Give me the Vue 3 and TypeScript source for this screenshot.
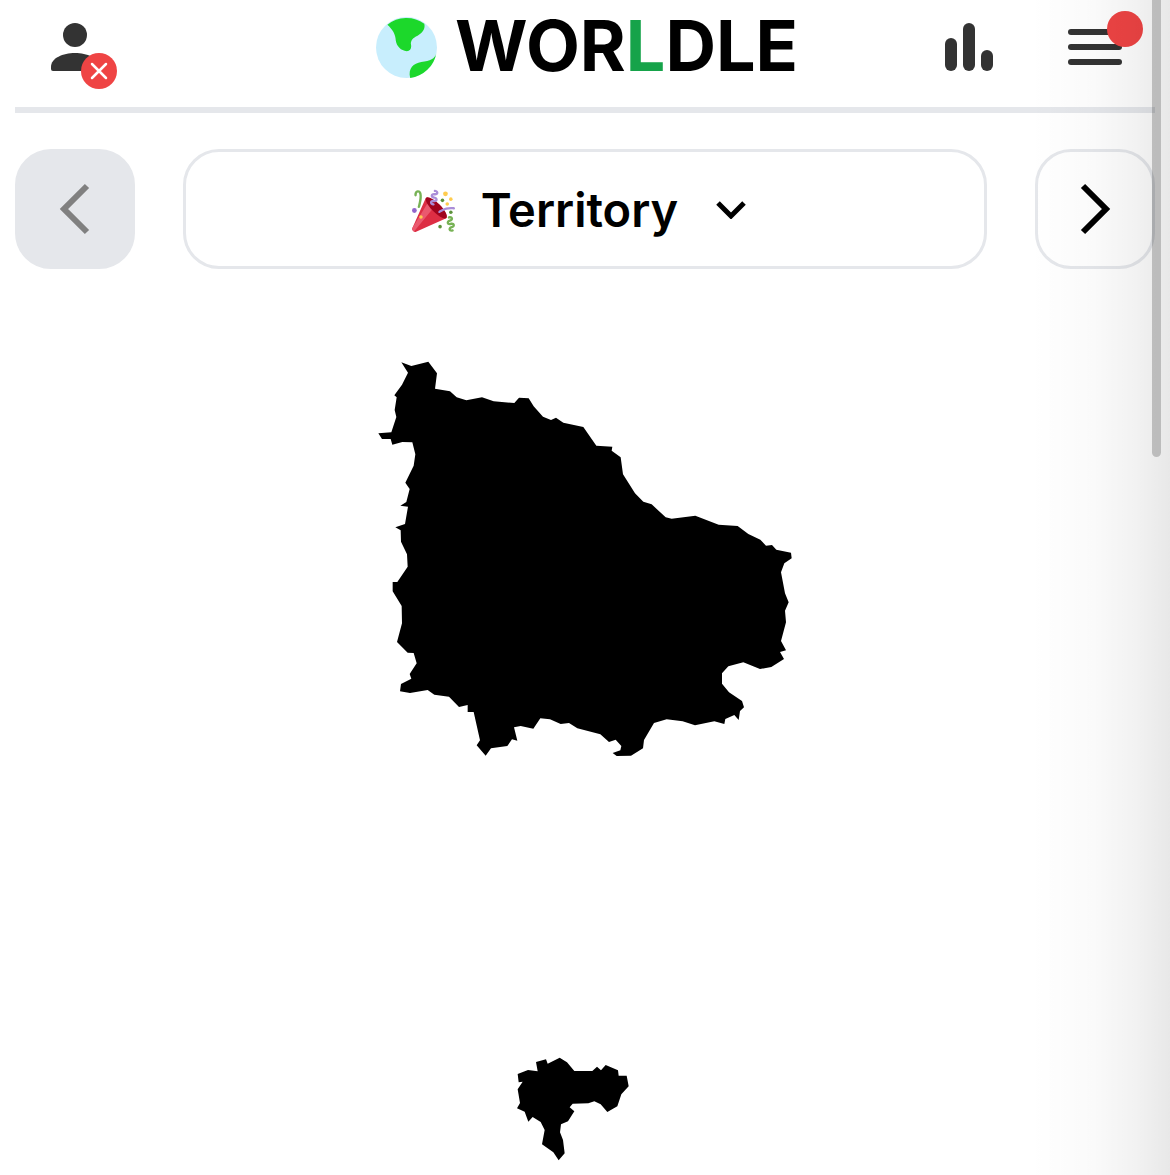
<script setup lang="ts">
import { ref } from 'vue'

interface Mode {
  name: string
}

const modes: Mode[] = [{ name: 'Territory' }, { name: 'Country' }]
const current = ref(0)

const title = [
  { text: 'WOR', accent: false },
  { text: 'L', accent: true },
  { text: 'DLE', accent: false },
]

const mainland =
  '94,37 124,48 175,35 201,70 195,116 240,124 260,142 289,151 336,142 371,154 433,159 447,143 476,145 491,169 519,200 543,210 558,203 580,218 640,231 ' +
  '679,287 727,290 725,302 752,322 759,373 795,430 820,455 845,463 887,502 905,506 976,497 1046,524 1103,528 1135,552 1171,569 1188,587 1206,585 1219,599 1263,608 1265,625 1243,640 ' +
  '1233,667 1245,730 1256,757 1245,782 1248,817 1233,873 1248,901 1230,906 1242,927 1204,951 1170,957 1120,937 1075,949 1056,970 1056,1001 1077,1027 1116,1053 1122,1072 1110,1083 1106,1110 1093,1095 1066,1107 1063,1122 1033,1114 975,1126 938,1114 890,1108 852,1119 822,1170 819,1195 783,1217 740,1218 728,1209 751,1201 754,1188 737,1169 717,1176 691,1153 ' +
  '622,1135 597,1119 572,1122 540,1108 511,1105 490,1136 452,1128 432,1132 442,1172 426,1168 412,1188 363,1195 347,1217 320,1186 330,1171 311,1086 293,1086 293,1065 267,1071 237,1040 193,1034 173,1020 120,1029 90,1024 93,1002 124,986 119,972 140,940 131,909 113,908 81,876 96,820 95,768 68,724 68,696 82,696 113,650 ' +
  '111,613 93,575 92,541 76,532 105,522 114,470 91,467 109,456 119,417 106,398 131,347 136,313 127,277 97,276 67,284 62,267 36,267 25,250 64,247 79,201 74,180 80,142 73,136 96,104 114,68'

const island =
  '108,51 138,43 143,56 179,38 201,52 223,78 277,78 291,65 303,76 317,60 354,76 356,92 380,92 386,124 364,148 352,184 322,201 302,178 283,169 265,175 218,176 209,187 223,199 204,229 183,238 180,262 189,285 194,325 176,346 160,322 126,298 134,255 122,231 98,216 85,230 74,200 51,190 60,174 53,133 68,110 56,112 53,87 84,75 113,79'
</script>

<template>
  <div class="page">
    <header class="header">
      <div class="side">
        <button class="icon-button" type="button" aria-label="Account, signed out">
          <svg viewBox="0 0 72 72" aria-hidden="true">
            <circle cx="36" cy="24" r="12" fill="#333" />
            <path d="M12 56c0-9 12-14 24-14s24 5 24 14v2q0 2-2 2H14q-2 0-2-2z" fill="#333" />
          </svg>
          <svg class="badge signed-out" viewBox="0 0 36 36" aria-hidden="true">
            <circle cx="18" cy="18" r="18" fill="#ef4444" />
            <path d="M11 11l14 14M25 11L11 25" stroke="#fff" stroke-width="2.5" stroke-linecap="round" />
          </svg>
        </button>
      </div>
      <div class="brand">
        <svg class="globe" viewBox="0 0 182 182" aria-hidden="true">
          <circle cx="91" cy="91" r="91" fill="#c8eefd" />
          <path
            fill="#1cd82b"
            d="M34 23A91 91 0 0 1 144 20C148 36 138 48 124 56C110 62 104 70 104 80C107 92 103 102 92 102C74 100 62 88 59 70C58 50 50 38 34 23Z"
          />
          <path fill="#1cd82b" d="M180 108C176 124 162 132 135 134C112 138 95 152 102 182A91 91 0 0 0 180 108Z" />
        </svg>
        <h1 class="title"><span v-for="part in title" :key="part.text" :class="{ accent: part.accent }">{{ part.text }}</span></h1>
      </div>
      <div class="side end">
        <button class="icon-button" type="button" aria-label="Statistics">
          <svg viewBox="0 0 72 72" aria-hidden="true" fill="#333">
            <rect x="12" y="27" width="12" height="33" rx="6" />
            <rect x="30" y="12" width="12" height="48" rx="6" />
            <rect x="48" y="39" width="12" height="21" rx="6" />
          </svg>
        </button>
        <button class="icon-button" type="button" aria-label="Menu">
          <svg viewBox="0 0 72 72" aria-hidden="true" fill="#333">
            <rect x="9" y="18" width="54" height="6" rx="3" />
            <rect x="9" y="33" width="54" height="6" rx="3" />
            <rect x="9" y="48" width="54" height="6" rx="3" />
          </svg>
          <span class="badge notice"></span>
        </button>
      </div>
    </header>

    <main>
      <nav class="modes" aria-label="Game mode">
        <button class="step" type="button" aria-label="Previous" :disabled="current === 0" @click="current--">
          <svg viewBox="0 0 36 54" aria-hidden="true">
            <path d="M30 4L7 27L30 50" fill="none" stroke="currentColor" stroke-width="6" />
          </svg>
        </button>
        <button class="picker" type="button" aria-haspopup="listbox">
          <svg class="party" viewBox="0 0 36 36" aria-hidden="true">
            <path fill="#DD2E44" d="M11.626 7.488c-.112.112-.197.247-.268.395l-.008-.008L.134 33.141l.011.011c-.208.403.14 1.223.853 1.937.713.713 1.533 1.061 1.936.853l.01.01L28.21 24.735l-.008-.009c.147-.07.282-.155.395-.269 1.562-1.562-.971-6.627-5.656-11.313-4.687-4.686-9.752-7.218-11.315-5.656z" />
            <path fill="#EA596E" d="M13 12L.416 32.506l-.282.635.011.011c-.208.403.14 1.223.853 1.937.232.232.473.408.709.557L17 17l-4-5z" />
            <path fill="#A0041E" d="M23.012 13.066c4.67 4.672 7.263 9.652 5.789 11.124-1.473 1.474-6.453-1.118-11.126-5.788-4.671-4.672-7.263-9.654-5.79-11.127 1.474-1.473 6.454 1.119 11.127 5.791z" />
            <path fill="#AA8DD8" d="M18.59 13.609c-.199.161-.459.245-.734.215-.868-.094-1.598-.396-2.109-.873-.541-.505-.808-1.183-.735-1.862.128-1.192 1.324-2.286 3.363-2.066.793.085 1.147-.17 1.159-.292.014-.121-.277-.446-1.07-.532-.868-.094-1.598-.396-2.11-.873-.541-.505-.809-1.183-.735-1.862.13-1.192 1.325-2.286 3.362-2.065.578.062.883-.057 1.012-.134.103-.063.144-.123.148-.158.012-.121-.275-.446-1.07-.532-.549-.06-.947-.552-.886-1.102.059-.549.55-.946 1.101-.886 2.037.219 2.973 1.542 2.844 2.735-.13 1.194-1.325 2.286-3.364 2.067-.578-.063-.88.057-1.01.134-.103.062-.145.123-.149.157-.013.122.276.446 1.071.532 2.037.22 2.973 1.542 2.844 2.735-.129 1.192-1.324 2.286-3.362 2.065-.578-.062-.882.058-1.012.134-.104.064-.144.124-.148.158-.013.121.276.446 1.07.532.548.06.947.553.886 1.102-.028.274-.167.511-.366.671z" />
            <path fill="#77B255" d="M30.661 22.857c1.973-.557 3.334.323 3.658 1.478.324 1.154-.378 2.615-2.35 3.17-.77.216-1.001.584-.97.701.034.118.425.312 1.193.095 1.972-.555 3.333.325 3.657 1.479.326 1.155-.378 2.614-2.351 3.17-.769.216-1.001.585-.967.702.033.117.423.311 1.192.095.53-.149 1.084.16 1.233.691.148.532-.161 1.084-.693 1.234-1.971.555-3.333-.323-3.659-1.479-.324-1.154.379-2.613 2.353-3.169.77-.217 1.001-.584.967-.702-.032-.117-.422-.312-1.19-.096-1.974.556-3.334-.322-3.659-1.479-.325-1.154.378-2.613 2.351-3.17.768-.215.999-.585.967-.701-.034-.118-.423-.312-1.192-.096-.532.15-1.083-.16-1.233-.691-.149-.53.161-1.082.693-1.232z" />
            <path fill="#AA8DD8" d="M23.001 20.16c-.294 0-.584-.129-.782-.375-.345-.432-.274-1.061.156-1.406.218-.175 5.418-4.259 12.767-3.208.547.078.927.584.849 1.131-.078.546-.58.93-1.132.848-6.493-.922-11.187 2.754-11.233 2.791-.186.148-.406.219-.625.219z" />
            <path fill="#77B255" d="M5.754 16c-.095 0-.192-.014-.288-.042-.529-.159-.829-.716-.67-1.245 1.133-3.773 2.16-9.794.898-11.364-.141-.178-.354-.353-.842-.316-.938.072-.849 2.051-.848 2.071.042.551-.372 1.031-.922 1.072-.559.034-1.031-.372-1.072-.923-.103-1.379.326-4.035 2.692-4.214 1.056-.08 1.933.287 2.552 1.057 2.371 2.951-.036 11.506-.542 13.192-.13.433-.528.712-.958.712z" />
            <circle fill="#5C913B" cx="25.5" cy="9.5" r="1.5" />
            <circle fill="#9266CC" cx="2" cy="18" r="2" />
            <circle fill="#5C913B" cx="32.5" cy="19.5" r="1.5" />
            <circle fill="#5C913B" cx="23.5" cy="31.5" r="1.5" />
            <circle fill="#FFCC4D" cx="28" cy="4" r="2" />
            <circle fill="#FFCC4D" cx="32.5" cy="8.5" r="1.5" />
            <circle fill="#FFCC4D" cx="29.5" cy="12.5" r="1.5" />
            <circle fill="#FFCC4D" cx="7.5" cy="23.5" r="1.5" />
          </svg>
          <span class="mode-name">{{ modes[current].name }}</span>
          <svg class="chevron" viewBox="0 0 30 18" aria-hidden="true">
            <path d="M2 2L15 15L28 2" fill="none" stroke="currentColor" stroke-width="5" />
          </svg>
        </button>
        <button class="step" type="button" aria-label="Next" :disabled="current === modes.length - 1" @click="current++">
          <svg viewBox="0 0 36 54" aria-hidden="true">
            <path d="M6 4L29 27L6 50" fill="none" stroke="currentColor" stroke-width="6" />
          </svg>
        </button>
      </nav>

      <svg class="territory" viewBox="0 0 1290 2475" role="img" aria-label="Outline of the territory to guess">
        <polygon :points="mainland" />
        <polygon :points="island" transform="translate(390 2085)" />
      </svg>
    </main>
    <div class="edge-shade" aria-hidden="true"></div>
    <div class="scroll-thumb" aria-hidden="true"></div>
  </div>
</template>

<style>
body {
  margin: 0;
  background: #fff;
}
</style>

<style scoped>
.page {
  position: relative;
  padding: 0 15px;
  overflow: hidden;
  color: #000;
  font-family: Inter, "Liberation Sans", sans-serif;
}

svg {
  display: block;
}

button {
  margin: 0;
  padding: 0;
  border: 0;
  background: none;
  color: inherit;
  font: inherit;
  cursor: pointer;
}

.header {
  display: flex;
  align-items: center;
  padding-bottom: 13px;
  border-bottom: 6px solid #e5e7eb;
}

.side {
  display: flex;
  flex: 1;
  padding: 0 24px;
}

.end {
  justify-content: flex-end;
  gap: 54px;
}

.icon-button {
  position: relative;
  width: 72px;
  height: 72px;
}

.badge {
  position: absolute;
  width: 36px;
  height: 36px;
}

.signed-out {
  left: 42px;
  top: 42px;
}

.notice {
  left: 48px;
  top: 0;
  border-radius: 50%;
  background: #ef4444;
}

.brand {
  display: flex;
  align-items: center;
  gap: 18px;
  padding-left: 4px;
}

.globe {
  width: 61px;
  height: 61px;
}

.title {
  margin: 0;
  padding-bottom: 2px;
  font-size: 70px;
  font-weight: 700;
  line-height: 92px;
}

.accent {
  color: #16a34a;
}

.modes {
  display: flex;
  gap: 48px;
  padding-top: 36px;
}

.step,
.picker {
  display: flex;
  align-items: center;
  justify-content: center;
  box-sizing: border-box;
  height: 120px;
  border: 3px solid #e5e7eb;
  border-radius: 36px;
}

.step {
  flex: none;
  width: 120px;
}

.step svg {
  width: 36px;
  height: 54px;
}

.step:disabled {
  background: #e5e7eb;
  color: #808080;
  cursor: default;
}

.picker {
  flex: 1;
  padding-right: 12px;
}

.picker svg {
  margin-top: 2px;
}

.party {
  width: 43px;
  height: 43px;
}

.mode-name {
  margin: 0 38px 0 26px;
  font-size: 47px;
  font-weight: 600;
}

.chevron {
  width: 30px;
  height: 18px;
}

.territory {
  width: 430px;
  max-width: 100%;
  margin: 81px auto 0;
}

.edge-shade {
  position: absolute;
  inset: 0 0 0 auto;
  width: 140px;
  background: linear-gradient(to right, rgba(0, 0, 0, 0), rgba(0, 0, 0, 0.02) 45%, rgba(0, 0, 0, 0.05) 75%, rgba(0, 0, 0, 0.09));
  pointer-events: none;
}

.scroll-thumb {
  position: absolute;
  top: 0;
  right: 9px;
  width: 9px;
  height: 457px;
  border-radius: 0 0 5px 5px;
  background: rgba(0, 0, 0, 0.2);
  pointer-events: none;
}
</style>
